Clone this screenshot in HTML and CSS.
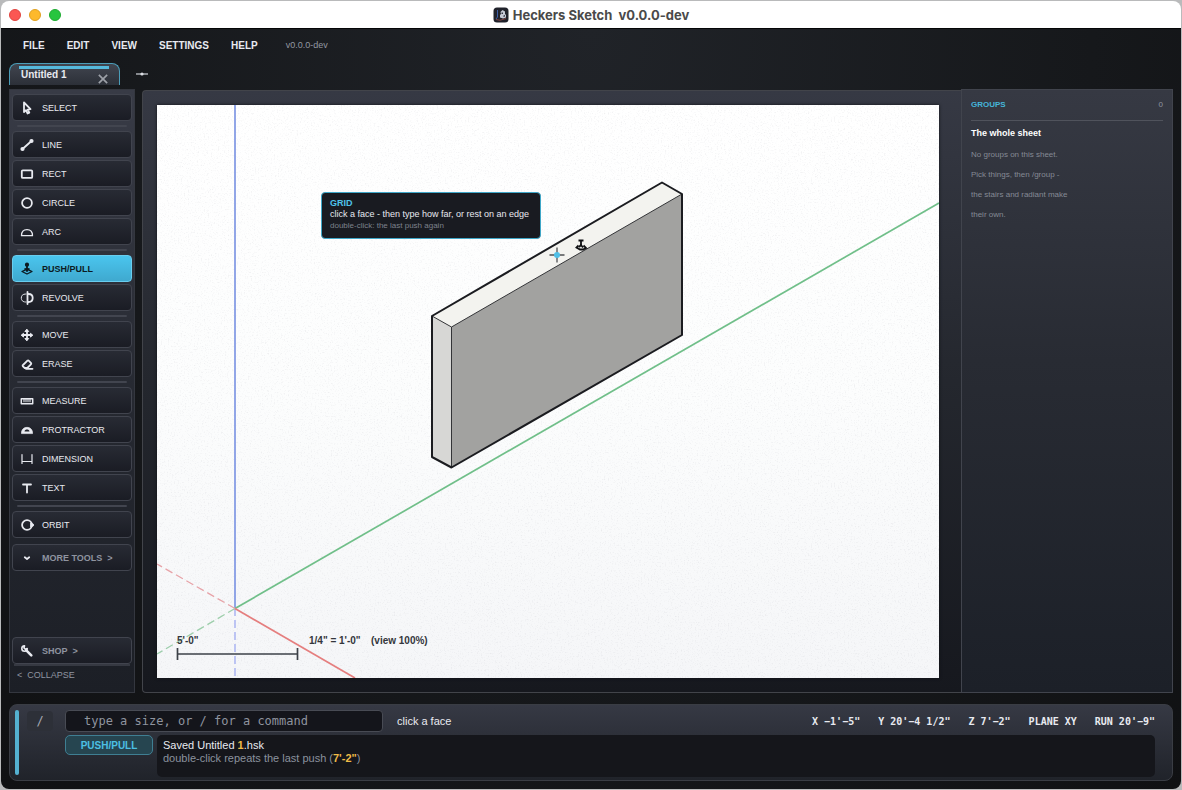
FILE: index.html
```html
<!DOCTYPE html>
<html lang="en">
<head>
<meta charset="utf-8">
<title>Heckers Sketch v0.0.0-dev</title>
<link rel="stylesheet" href="styles.css">
</head>
<body>
<div class="window">
  <header class="titlebar">
    <div class="lights">
      <button class="light light-close" aria-label="Close"></button>
      <button class="light light-min" aria-label="Minimize"></button>
      <button class="light light-zoom" aria-label="Zoom"></button>
    </div>
    <h1 class="title">
      <svg class="app-icon" viewBox="0 0 16 16" aria-hidden="true"><rect x=".5" y=".5" width="15" height="15" rx="3.500" fill="#20222b"/><path d="M4.500 3v7l-1.500 2" stroke="#3d5ea6" fill="none"/><path d="M3 12.500l4 .8 6-1.800" stroke="#7a4040" fill="none"/><path d="M7.500 5l2-2 2.500 1.500v2.500l1 1v2.500l-3 1-3-1V8l1-1z" fill="#c6cad6"/><path d="M8.500 5.500h1.500v1.500H8.500zM10.500 8.500l1.500-.5v1.500l-1.500.5z" fill="#343846"/></svg>
      <span class="title-text">Heckers Sketch&nbsp; v0.0.0-dev</span>
    </h1>
  </header>

  <div class="app">
    <nav class="menu">
      <button class="menu-item">FILE</button>
      <button class="menu-item">EDIT</button>
      <button class="menu-item">VIEW</button>
      <button class="menu-item">SETTINGS</button>
      <button class="menu-item">HELP</button>
      <span class="version">v0.0.0-dev</span>
    </nav>

    <div class="tabs">
      <div class="tab">
        <button class="tab-name">Untitled 1</button>
        <button class="tab-close" aria-label="Close tab"><svg class="icon-x" viewBox="0 0 12 12"><path d="M1 1l10 10M11 1L1 11"/></svg></button>
      </div>
      <button class="tab-add" aria-label="New tab"><svg class="icon-add" viewBox="0 0 12 6"><path d="M0 3h12" stroke="#c3c7ce" stroke-width="1.300"/><circle cx="6" cy="3" r="1.600" fill="#dcdfe4"/></svg></button>
    </div>

    <div class="workspace">
      <aside class="tools">
        <button class="tool"><svg class="icon" viewBox="0 0 14 14"><path d="M4 1.500v9.500l2-1.800 1.500 3.300 1.800-.9-1.500-3 2.700-.4z"/></svg>SELECT</button>
        <hr class="rule">
        <button class="tool"><svg class="icon" viewBox="0 0 14 14"><path d="M2.500 11l9-8"/><circle cx="2.500" cy="11" r="1.200" class="solid"/><circle cx="11.500" cy="3" r="1.200" class="solid"/></svg>LINE</button>
        <button class="tool"><svg class="icon" viewBox="0 0 14 14"><rect x="1.800" y="3.300" width="10.400" height="7.600" rx="1"/></svg>RECT</button>
        <button class="tool"><svg class="icon" viewBox="0 0 14 14"><circle cx="7" cy="7" r="4.900"/></svg>CIRCLE</button>
        <button class="tool"><svg class="icon" viewBox="0 0 14 14"><path d="M1.500 10.700c0-3.700 2.300-6 5.500-6s5.500 2.300 5.500 6M1.500 10.700h11" stroke-width="1.300"/></svg>ARC</button>
        <hr class="rule">
        <button class="tool tool-active" aria-pressed="true"><svg class="icon" viewBox="0 0 14 14"><path d="M7 3v6M5.200 7L7 8.800 8.800 7"/><path d="M4.500 8.300L2 9.500l5 2.500 5-2.500-2.500-1.200" stroke-width="1.300"/><circle cx="7" cy="2.700" r="1.200" class="solid"/></svg>PUSH/PULL</button>
        <button class="tool"><svg class="icon" viewBox="0 0 14 14"><path d="M7.500 1v12"/><path d="M7.500 3h1c2.800 0 4.200 1.800 4.200 4s-1.400 4-4.200 4h-1"/><path d="M5.500 3C2.500 3 1.300 5 1.300 7s1.200 4 4.200 4" stroke-dasharray="3 1" stroke-width="1"/></svg>REVOLVE</button>
        <hr class="rule">
        <button class="tool"><svg class="icon" viewBox="0 0 14 14"><path d="M7 2.500v9M2.500 7h9"/><path class="solid" d="M7 1.500l1.700 2H5.300zM7 12.500l1.700-2H5.300zM1.500 7l2-1.700v3.400zM12.500 7l-2-1.700v3.400z" stroke-width="1"/></svg>MOVE</button>
        <button class="tool"><svg class="icon" viewBox="0 0 14 14"><path d="M3 8l4.200-4.200c.6-.5 1.200-.5 1.700 0l2 2c.5.5.5 1 0 1.500L7.300 11H4.700L2.900 9.300c-.4-.4-.4-.9.100-1.300zM6 11.800h6.500"/></svg>ERASE</button>
        <hr class="rule">
        <button class="tool"><svg class="icon" viewBox="0 0 14 14"><rect x="1.300" y="4.800" width="11.400" height="5" stroke-width="1.500"/><path d="M4 5v2.800M6 5v2.800M8 5v2.800M10 5v2.800" stroke-width="1.100"/></svg>MEASURE</button>
        <button class="tool"><svg class="icon" viewBox="0 0 14 14"><path d="M1.500 10.200c0-3.800 2.300-5.800 5.500-5.800s5.500 2 5.500 5.800z" class="solid" stroke-width=".8"/><path d="M4.500 8.600c.3-1.500 1.200-2 2.500-2s2.200.5 2.500 2z" fill="#20232b" stroke="none"/></svg>PROTRACTOR</button>
        <button class="tool"><svg class="icon" viewBox="0 0 14 14"><path d="M2 2.500v9M12 2.500v9M2 9.500h10" stroke-width="1.200"/></svg>DIMENSION</button>
        <button class="tool"><svg class="icon" viewBox="0 0 14 14"><path d="M3 3.500h8M7 3.500v8" stroke-width="1.800"/></svg>TEXT</button>
        <hr class="rule">
        <button class="tool"><svg class="icon" viewBox="0 0 14 14"><circle cx="7" cy="7" r="4.900"/><path class="solid" d="M11 5.300L13.300 7 11 8.700z"/></svg>ORBIT</button>
        <button class="tool tool-more"><svg class="icon" viewBox="0 0 14 14"><path d="M4.800 6.300L7 8l2.200-1.700" stroke-width="1.800"/></svg>MORE TOOLS&nbsp; &gt;</button>
        <button class="tool tool-shop"><svg class="icon" viewBox="0 0 14 14"><path d="M6.300 6.300l5 5" stroke-width="2.600"/><path d="M4.500 1.800a2.700 2.700 0 1 0 2.700 2.700L5.300 5.300 4 4z" fill="none" stroke-width="1.600"/></svg>SHOP&nbsp; &gt;</button>
        <button class="collapse">&lt;&nbsp; COLLAPSE</button>
      </aside>

      <main class="stage">
        <div class="sheet">
          <svg class="drawing" viewBox="0 0 782 573" preserveAspectRatio="xMinYMax slice" role="img" aria-label="Isometric wall">
            <defs>
              <linearGradient id="paper" x1="0" y1="0" x2="0" y2="1"><stop offset="0" stop-color="#ffffff"/><stop offset=".5" stop-color="#fcfdfd"/><stop offset="1" stop-color="#f5f6f8"/></linearGradient>
              <filter id="grain" x="0" y="0" width="100%" height="100%"><feTurbulence type="fractalNoise" baseFrequency=".7" numOctaves="2" seed="4"/><feColorMatrix values="0 0 0 0 .4  0 0 0 0 .4  0 0 0 0 .45  0 0 0 .5 -.27"/></filter>
            </defs>
            <rect width="782" height="573" fill="url(#paper)"/>
            <rect width="782" height="573" filter="url(#grain)"/>
            <g fill="none">
              <path d="M78 0v503" stroke="#7f97e3" stroke-width="1.700"/>
              <path d="M78 503v70" stroke="#b3bcf2" stroke-width="1.700" stroke-dasharray="8 4"/>
              <path d="M78 503.500L782 98" stroke="#70bf89" stroke-width="1.700"/>
              <path d="M78 503.500L0 549" stroke="#9dceab" stroke-width="1.300" stroke-dasharray="8 4"/>
              <path d="M78 503.500L198 573" stroke="#e57e7e" stroke-width="1.700"/>
              <path d="M78 503.500L0 459" stroke="#e7a3a8" stroke-width="1.300" stroke-dasharray="8 4"/>
            </g>
            <path d="M275 211L505 77.500 525 89 294.500 222z" fill="#f3f3ef"/>
            <path d="M275 211l19.500 11v140.500L275 352z" fill="#d7d7d5"/>
            <path d="M294.500 222L525 89v141L294.500 362.500z" fill="#a2a2a0"/>
            <path d="M275 211l19.500 11L525 89M294.500 222v140" fill="none" stroke="#333437"/>
            <path d="M275 211L505 77.500 525 89v141L294.500 362.500 275 352z" fill="none" stroke="#1b1c20" stroke-width="2" stroke-linejoin="round"/>
            <path d="M400 142.500v15M392.500 150h15" stroke="#4f5154" stroke-width="1.300"/>
            <circle cx="400" cy="150" r="3" fill="#4fbfe6"/>
            <g fill="none" stroke="#101114" stroke-width="1.800"><path d="M421.500 135.500h5M424 135v5.500M421.500 140.500l-2 2 3.500 2h3l3-1.500-2.500-2.500"/><path d="M422 142l2-2 2 2.500"/></g>
            <path d="M20.500 543v12M140.500 543v12M20.500 549h120" stroke="#3c4148" stroke-width="1.700"/>
            <text class="scale" x="20" y="539">5'-0"</text>
            <text class="scale" x="152" y="539">1/4" = 1'-0"</text>
            <text class="scale" x="214" y="539">(view 100%)</text>
          </svg>
          <div class="hint" role="tooltip">
            <b class="hint-head">GRID</b>
            <span class="hint-main">click a face - then type how far, or rest on an edge</span>
            <span class="hint-sub">double-click: the last push again</span>
          </div>
        </div>
      </main>

      <aside class="groups">
        <header class="groups-head"><h2 class="groups-title">GROUPS</h2><span class="groups-count">0</span></header>
        <h3 class="groups-name">The whole sheet</h3>
        <p class="groups-note">No groups on this sheet.<br>Pick things, then /group -<br>the stairs and radiant make<br>their own.</p>
      </aside>
    </div>

    <footer class="console">
      <div class="accent"></div>
      <button class="slash">/</button>
      <div class="console-body">
        <div class="command">
          <input class="command-input" type="text" aria-label="Command" placeholder="type a size, or / for a command">
          <span class="prompt">click a face</span>
          <div class="readout"><span>X −1'−5"</span><span>Y 20'−4 1/2"</span><span>Z 7'−2"</span><span>PLANE XY</span><span>RUN 20'−9"</span></div>
        </div>
        <div class="output">
          <button class="chip">PUSH/PULL</button>
          <div class="log">
            <p class="log-line">Saved Untitled <b class="num">1</b>.hsk</p>
            <p class="log-line log-dim">double-click repeats the last push (<b class="num">7'-2"</b>)</p>
          </div>
        </div>
      </div>
    </footer>
  </div>
</div>
</body>
</html>
```
FILE: styles.css
```css
* { box-sizing: border-box; margin: 0; }

body {
  background: #b9babb;
  font-family: "Liberation Sans", Arial, sans-serif;
  color: #e8eaf0;
}

button {
  border: 0;
  padding: 0;
  background: none;
  color: inherit;
  font: inherit;
}

.window {
  display: flex;
  flex-direction: column;
  min-height: 100vh;
  padding: 1px;
}

.titlebar {
  display: grid;
  grid-template-columns: 1fr auto 1fr;
  align-items: center;
  height: 28px;
  padding: 0 8px;
  background: #fff;
  border-bottom: 1px solid #050607;
  border-radius: 8px 8px 0 0;
}

.lights { display: flex; gap: 8px; }
.light { width: 12px; height: 12px; border-radius: 50%; }
.light-close { background: #fb5753; border: 1px solid #e0443f; }
.light-min { background: #fdb92c; border: 1px solid #e0a01f; }
.light-zoom { background: #27c53f; border: 1px solid #1dab30; }

.title {
  display: flex;
  align-items: center;
  gap: 4px;
  color: #4a4a4a;
  font: 700 13px/16px Inter, sans-serif;
}
.app-icon { width: 16px; height: 16px; }

.app {
  flex: 1;
  display: flex;
  flex-direction: column;
  padding: 0 8px 8px;
  background: radial-gradient(ellipse at 50% 0, #202328, #16181b 60%, #101113);
  border-radius: 0 0 8px 8px;
}

.menu {
  display: flex;
  align-items: center;
  gap: 22px;
  height: 34px;
  padding: 0 14px;
}
.menu-item { font-size: 10px; font-weight: bold; line-height: 12px; }
.version { margin-left: 6px; color: #9297a0; font-size: 9px; line-height: 12px; padding-bottom: 2px; }

.tabs { display: flex; align-items: center; gap: 16px; height: 26px; padding-bottom: 4px; }
.tab {
  display: flex;
  justify-content: space-between;
  align-items: flex-end;
  width: 111px;
  height: 22px;
  padding: 0 11px;
  background: linear-gradient(#41454f, #2c3038);
  border: 1px solid #4b9db8;
  border-bottom: 0;
  border-radius: 8px 8px 0 0;
}
.tab-name {
  position: relative;
  align-self: flex-start;
  padding-top: 5px;
  font-size: 10px;
  font-weight: bold;
  line-height: 12px;
}
.tab-name::before {
  content: "";
  position: absolute;
  top: 2px;
  left: -2px;
  width: 90px;
  height: 3px;
  background: #55b9dc;
}
.tab-close { height: 11px; display: flex; }
.icon-x { width: 10px; height: 10px; stroke: #9da1a8; stroke-width: 2; }
.tab-add { display: flex; }
.icon-add { width: 12px; height: 6px; }

.workspace { flex: 1; display: flex; }

.tools {
  display: flex;
  flex-direction: column;
  gap: 2px;
  width: 126px;
  margin-right: 7px;
  padding: 4px 2px;
  background: linear-gradient(#383b46, #252830 55%, #1c1f26);
  border: 1px solid #34373f;
}
.tool {
  display: flex;
  align-items: center;
  gap: 8px;
  height: 27px;
  padding: 0 7px;
  background: linear-gradient(#282b34, #1a1c24);
  border: 1px solid #41444e;
  border-radius: 4px;
  font-size: 9px;
}
.icon {
  width: 14px;
  height: 14px;
  fill: none;
  stroke: currentColor;
  stroke-width: 1.800;
  stroke-linejoin: round;
  stroke-linecap: round;
}
.solid { fill: currentColor; }
.tool-active {
  background: linear-gradient(#4ac5ee, #3fa9cf);
  border-color: #69cdee;
  color: #0c1a22;
  font-weight: bold;
}
.rule { height: 2px; margin: 2px 5px; border: 0; border-radius: 1px; background: #42454f; }
.tool-more { margin-top: 4px; }
.tool-shop { margin-top: auto; }
.tool-more, .tool-shop { color: #8f94a0; font-weight: bold; }
.tool-more .icon, .tool-shop .icon { color: #e8eaf0; }
.collapse {
  margin: -2px 2px 7px;
  padding: 3px 3px 0;
  border-top: 2px solid #363942;
  color: #8f94a0;
  font-size: 9px;
  line-height: 12px;
  text-align: left;
}

.stage {
  flex: 1;
  display: flex;
  margin-top: 1px;
  padding: 14px 22px 14px 14px;
  background: linear-gradient(#363944, #25282f 45%, #16181e);
  border: 1px solid #42444a;
  border-right: 0;
  border-radius: 4px 0 0 4px;
}
.sheet { position: relative; flex: 1; box-shadow: 0 0 3px #111217; }
.drawing { position: absolute; width: 100%; height: 100%; }
.scale { fill: #33363c; font-size: 10px; font-weight: bold; white-space: pre; }

.hint {
  position: absolute;
  top: 87px;
  left: 164px;
  display: flex;
  flex-direction: column;
  min-width: 220px;
  padding: 5px 8px 7px;
  background: #191b21;
  border: 1px solid #3fa7c8;
  border-radius: 4px;
  font-size: 9px;
  line-height: 11px;
}
.hint-head { color: #4fc3ea; }
.hint-sub { color: #7d828c; font-size: 8px; }

.groups {
  width: 212px;
  padding: 9px 9px;
  background: linear-gradient(#363943, #282b33 45%, #1c2028);
  border: 1px solid #41444d;
}
.groups-head {
  display: flex;
  justify-content: space-between;
  padding-bottom: 9px;
  border-bottom: 1px solid #50535c;
  font-size: 8px;
  line-height: 12px;
}
.groups-title { color: #45b5da; font-size: 8px; }
.groups-count { color: #9095a0; }
.groups-name { padding: 6px 0; font-size: 9px; line-height: 12px; color: #fff; }
.groups-note { color: #858a95; font-size: 8px; line-height: 20px; }

.console {
  display: flex;
  margin-top: 11px;
  padding: 5px 17px 3px 5px;
  background: linear-gradient(#363944, #20232a);
  border: 1px solid #3a3d44;
  border-radius: 8px;
}
.accent { width: 4px; margin-bottom: 2px; background: #54b1d1; border-radius: 2px; }
.slash {
  width: 26px;
  height: 20px;
  margin: 1px 12px 0 8px;
  background: #2d3038;
  border-radius: 4px;
  color: #a5a9b3;
  font: 12px "DejaVu Sans Mono", monospace;
}
.console-body { flex: 1; }
.command { display: flex; align-items: center; height: 22px; }
.command-input {
  width: 318px;
  height: 22px;
  padding: 0 18px;
  background: #14151b;
  border: 1px solid #484b54;
  border-radius: 4px;
  color: #e8eaf0;
  font: 12px "DejaVu Sans Mono", monospace;
}
.command-input::placeholder { color: #8f949f; opacity: 1; }
.prompt { margin-left: 14px; font-size: 11px; }
.readout {
  display: flex;
  gap: 18px;
  margin-left: auto;
  font: bold 10px "DejaVu Sans Mono", monospace;
  white-space: pre;
}
.output { display: flex; align-items: flex-start; gap: 4px; margin-top: 3px; }
.chip {
  width: 88px;
  height: 20px;
  background: #264550;
  border: 1px solid #3f7f93;
  border-radius: 5px;
  color: #4cbfe3;
  font-size: 10px;
  font-weight: bold;
}
.log {
  flex: 1;
  height: 42px;
  padding: 4px 6px;
  background: #15161b;
  border-radius: 5px;
}
.log-line { font-size: 11px; line-height: 13px; }
.log-dim { color: #8b929e; }
.num { color: #f0bb47; }
```
